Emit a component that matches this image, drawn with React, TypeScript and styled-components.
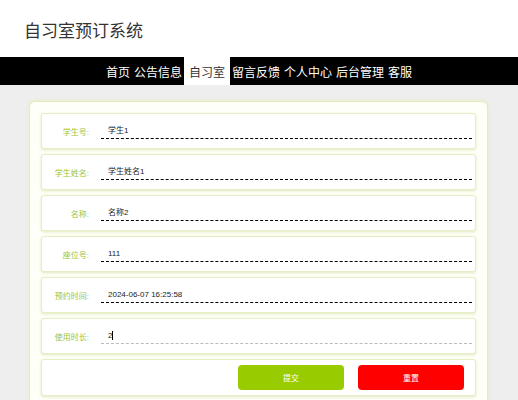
import React from "react";
import styled, { createGlobalStyle } from "styled-components";

const GlobalStyle = createGlobalStyle`
  html, body {
    margin: 0;
    padding: 0;
    background: #eeeeee;
    font-family: "Liberation Sans", "Noto Sans CJK SC", sans-serif;
  }
`;

const navItems = ["首页", "公告信息", "自习室", "留言反馈", "个人中心", "后台管理", "客服"];

const fields = [
  { label: "学生号:", value: "学生1" },
  { label: "学生姓名:", value: "学生姓名1" },
  { label: "名称:", value: "名称2" },
  { label: "座位号:", value: "111" },
  { label: "预约时间:", value: "2024-06-07 16:25:58" },
  { label: "使用时长:", value: "2", focused: true },
];

export default function App() {
  return (
    <>
      <GlobalStyle />
      <Header>
        <Title>自习室预订系统</Title>
      </Header>
      <Nav>
        {navItems.map((item) => (
          <NavItem key={item} $active={item === "自习室"}>
            {item}
          </NavItem>
        ))}
      </Nav>
      <Main>
        <Card>
          {fields.map(({ label, value, focused }) => (
            <Row key={label}>
              <Label>{label}</Label>
              <Input $focused={!!focused}>
                {value}
                {focused && <Caret />}
              </Input>
            </Row>
          ))}
          <ButtonRow>
            <Button $color="#99cc00">提交</Button>
            <Button $color="#ff0000">重置</Button>
          </ButtonRow>
        </Card>
      </Main>
    </>
  );
}

const Header = styled.div`
  height: 57px;
  background: #ffffff;
  display: flex;
  align-items: center;
  padding-left: 24px;
`;

const Title = styled.div`
  font-size: 17px;
  color: #333333;
  padding-top: 1px;
`;

const Nav = styled.div`
  height: 28px;
  background: #000000;
  display: flex;
  justify-content: center;
  align-items: stretch;
`;

const NavItem = styled.div<{ $active: boolean }>`
  display: flex;
  align-items: center;
  font-size: 12px;
  padding: ${(p) => (p.$active ? "0 5px" : "0 2px")};
  color: ${(p) => (p.$active ? "#333333" : "#ffffff")};
  background: ${(p) => (p.$active ? "#ffffff" : "transparent")};
`;

const Main = styled.div`
  padding: 16px 30px 0 29px;
`;

const Card = styled.div`
  background: #fefff8;
  border: 1px solid #e2edbb;
  border-radius: 6px;
  box-shadow: 0 0 4px #e4eec4;
  padding: 11px 11px 20px;
  display: flex;
  flex-direction: column;
  gap: 5px;
`;

const Row = styled.div`
  height: 34px;
  background: #ffffff;
  border: 1px solid #e6eec8;
  border-radius: 3px;
  box-shadow: 0 1px 3px #dfe8bd;
  display: flex;
  align-items: center;
`;

const Label = styled.div`
  width: 47px;
  font-size: 8px;
  color: #9cc43a;
  text-align: right;
  margin-right: 12px;
`;

const Input = styled.div<{ $focused: boolean }>`
  width: 364px;
  height: 14px;
  padding-left: 7px;
  font-size: 8px;
  line-height: 14px;
  color: #222222;
  border-bottom: 1px dashed ${(p) => (p.$focused ? "#bbbbbb" : "#000000")};
  display: flex;
  align-items: center;
`;

const Caret = styled.span`
  display: inline-block;
  width: 1px;
  height: 9px;
  background: #000000;
`;

const ButtonRow = styled(Row)`
  height: 35px;
  justify-content: flex-end;
  gap: 14px;
  padding-right: 11px;
`;

const Button = styled.div<{ $color: string }>`
  width: 106px;
  height: 25px;
  border-radius: 4px;
  background: ${(p) => p.$color};
  color: #ffffff;
  font-size: 8px;
  display: flex;
  align-items: center;
  justify-content: center;
`;
